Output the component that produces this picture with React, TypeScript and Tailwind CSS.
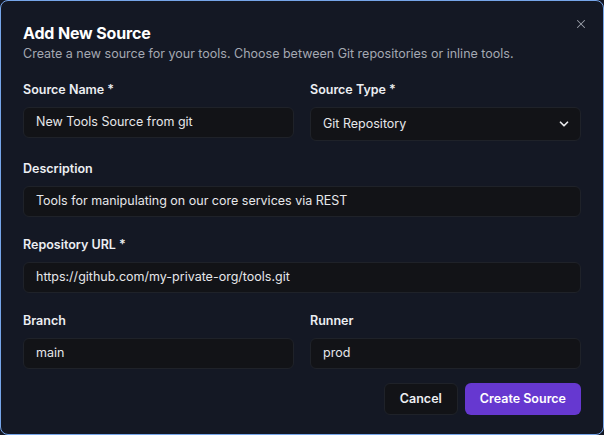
import { X, ChevronDown } from "lucide-react";

const boxCls =
  "flex w-full items-center justify-between rounded-md border border-[#1f2229] bg-[#121317] px-3 text-[12.5px] text-[#e6e7ea]";

function Field({ label, value, select }: { label: string; value: string; select?: boolean }) {
  return (
    <div className="flex flex-col gap-[7px]">
      <label className="text-[12.5px] font-semibold leading-5 text-[#eceef2]">{label}</label>
      <div className={boxCls + (select ? " h-[34px]" : " h-[31px]")}>
        <span>{value}</span>
        {select && <ChevronDown size={14} strokeWidth={3} className="-mr-[3px] text-[#e6e7ea]" />}
      </div>
    </div>
  );
}

export default function App() {
  return (
    <div className="h-[435px] w-[604px] bg-[#141824] font-['Inter',sans-serif]">
      <div className="relative h-full w-full rounded-lg border border-[#76a5e9] bg-[#141824] px-[22px] pt-[21px]">
        <button className="absolute right-[15px] top-[16px] text-[#9ca0aa]">
          <X size={14} strokeWidth={1.75} />
        </button>

        {/* Header */}
        <h2 className="text-[16px] font-bold leading-[22px] tracking-[-0.01em] text-white">Add New Source</h2>
        <p className="text-[12.5px] leading-5 text-[#a4a8b2]">
          Create a new source for your tools. Choose between Git repositories or inline tools.
        </p>

        {/* Form */}
        <div className="mt-[16px] flex flex-col gap-[18px]">
          <div className="grid grid-cols-2 gap-4">
            <Field label="Source Name *" value="New Tools Source from git" />
            <Field label="Source Type *" value="Git Repository" select />
          </div>
          <Field label="Description" value="Tools for manipulating on our core services via REST" />
          <Field label="Repository URL *" value="https://github.com/my-private-org/tools.git" />
          <div className="grid grid-cols-2 gap-4">
            <Field label="Branch" value="main" />
            <Field label="Runner" value="prod" />
          </div>
        </div>

        {/* Actions */}
        <div className="mt-[14px] flex justify-end gap-[7px]">
          <button className="h-8 rounded-md border border-[#1f2229] bg-[#121317] px-[15px] text-[12.5px] font-semibold text-[#eceef2]">
            Cancel
          </button>
          <button className="h-8 rounded-md bg-[#6638d0] px-[15px] text-[12.5px] font-semibold text-white">
            Create Source
          </button>
        </div>
      </div>
    </div>
  );
}
